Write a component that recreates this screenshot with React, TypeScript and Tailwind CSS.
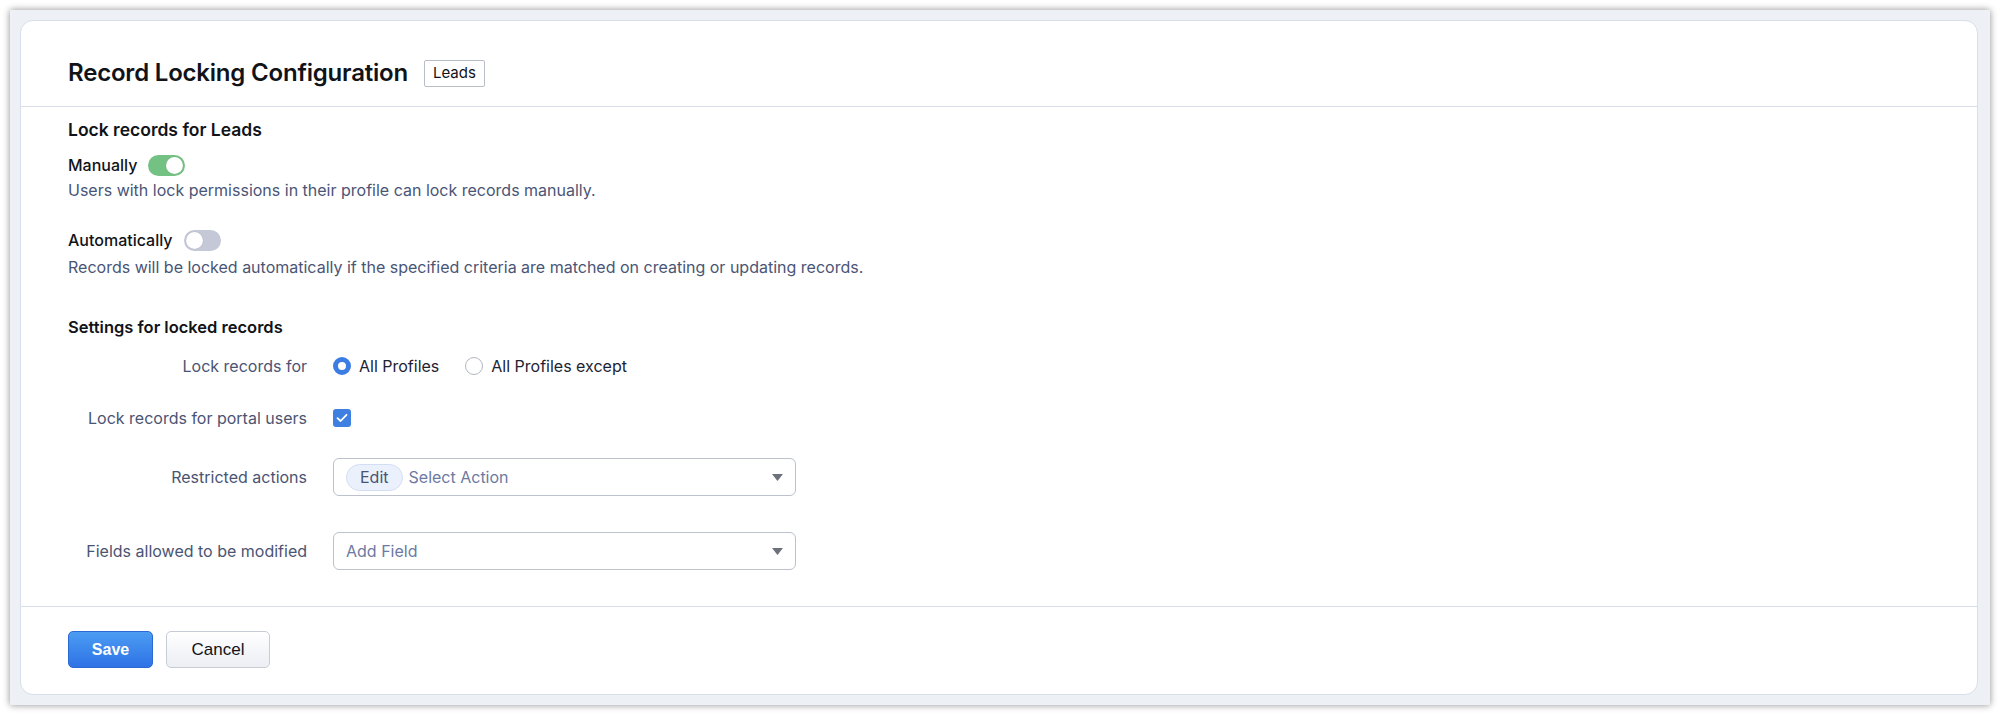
import React from "react";

const puvi = { fontFamily: "Inter, 'Open Sans', sans-serif" };

const Toggle: React.FC<{ on: boolean }> = ({ on }) => (
  <span
    className={`ml-[11px] inline-flex h-[21px] w-[37px] items-center rounded-full px-[2px] ${
      on ? "justify-end bg-[#74c283]" : "justify-start bg-[#c5c9d7]"
    }`}
  >
    <span className="h-[17px] w-[17px] rounded-full bg-white shadow-[0_0_1px_rgba(0,0,0,0.25)]" />
  </span>
);

const Radio: React.FC<{ checked: boolean; label: string }> = ({ checked, label }) => (
  <label className="flex items-center gap-[8px] text-[16px] text-[#1d2333]">
    {checked ? (
      <span className="h-[18px] w-[18px] rounded-full border-[5px] border-[#3b7de2] bg-white" />
    ) : (
      <span className="h-[18px] w-[18px] rounded-full border-[1.5px] border-[#b3b7c2] bg-white" />
    )}
    {label}
  </label>
);

const Caret = () => (
  <svg width="11" height="7" viewBox="0 0 11 7" className="ml-auto">
    <path d="M0 0 H11 L5.5 7 Z" fill="#6d717c" />
  </svg>
);

const FormRow: React.FC<{ label: string; className: string; children: React.ReactNode }> = ({
  label,
  className,
  children,
}) => (
  <div className={`flex items-center ${className}`}>
    <div className="w-[239px] shrink-0 text-right text-[16px] text-[#4a5473]">{label}</div>
    <div className="ml-[26px] flex items-center">{children}</div>
  </div>
);

export default function App() {
  return (
    <div className="min-h-screen bg-white p-[10px]" style={puvi}>
      <div className="h-[695px] w-[1980px] bg-[#edf0f5] p-[10px] shadow-[0_0_7px_rgba(0,0,0,0.45)]">
        <div className="flex h-[675px] w-[1958px] flex-col rounded-[13px] border border-[#d8dfeb] bg-white">
          {/* header */}
          <div className="flex items-center border-b border-[#d8dfeb] pb-[18px] pl-[47px] pt-[37px]">
            <h1 className="text-[24px] font-semibold leading-[30px] tracking-[-0.2px] text-[#111318]">
              Record Locking Configuration
            </h1>
            <span className="ml-[16px] flex h-[27px] items-center rounded-[2px] border border-[#b9bdc7] px-[8px] text-[15px] text-[#111318]">
              Leads
            </span>
          </div>

          {/* body */}
          <div className="flex h-[499px] flex-col pl-[47px] pt-[11px] leading-[24px]">
            <div className="text-[17.5px] font-semibold text-[#111318]">Lock records for Leads</div>
            <div className="mt-[11px] flex h-[24px] items-center text-[16px] font-medium text-[#111318]">
              Manually
              <Toggle on />
            </div>
            <div className="mt-[1px] text-[16px] text-[#4a5576]">
              Users with lock permissions in their profile can lock records manually.
            </div>
            <div className="mt-[26px] flex h-[24px] items-center text-[16px] font-medium text-[#111318]">
              Automatically
              <Toggle on={false} />
            </div>
            <div className="mt-[3px] text-[16px] text-[#4a5576]">
              Records will be locked automatically if the specified criteria are matched on creating or updating records.
            </div>
            <div className="mt-[36px] text-[16.5px] font-semibold text-[#111318]">Settings for locked records</div>

            <FormRow label="Lock records for" className="mt-[15px] h-[24px]">
              <Radio checked label="All Profiles" />
              <div className="ml-[26px]">
                <Radio checked={false} label="All Profiles except" />
              </div>
            </FormRow>

            <FormRow label="Lock records for portal users" className="mt-[28px] h-[24px]">
              <span className="flex h-[18px] w-[18px] items-center justify-center rounded-[3px] bg-[#3f7fe2]">
                <svg width="12" height="10" viewBox="0 0 12 10">
                  <path d="M1.5 5.2 L4.6 8 L10.5 1.8" fill="none" stroke="white" strokeWidth="1.8" strokeLinecap="round" strokeLinejoin="round" />
                </svg>
              </span>
            </FormRow>

            <FormRow label="Restricted actions" className="mt-[28px] h-[38px]">
              <div className="flex h-[38px] w-[463px] items-center rounded-[6px] border border-[#bcc1cc] pl-[12px] pr-[12px]">
                <span className="flex h-[27px] items-center rounded-full border border-[#d3def3] bg-[#ebf1fc] px-[13px] text-[16px] text-[#4a5473]">
                  Edit
                </span>
                <span className="ml-[6px] text-[16px] text-[#6c7aa2]">Select Action</span>
                <Caret />
              </div>
            </FormRow>

            <FormRow label="Fields allowed to be modified" className="mt-[36px] h-[38px]">
              <div className="flex h-[38px] w-[463px] items-center rounded-[6px] border border-[#bcc1cc] pl-[12px] pr-[12px]">
                <span className="text-[16px] text-[#6c7aa2]">Add Field</span>
                <Caret />
              </div>
            </FormRow>
          </div>

          {/* footer */}
          <div
            className="flex items-center gap-[13px] border-t border-[#d8dfeb] pl-[47px] pt-[24px]"
            style={{ fontFamily: "'Liberation Sans', Arial, sans-serif" }}
          >
            <button className="h-[37px] w-[85px] rounded-[5px] border border-[#2b69d3] bg-gradient-to-b from-[#4c9cf2] to-[#2f72e6] text-[16px] font-bold text-white">
              Save
            </button>
            <button className="h-[37px] w-[104px] rounded-[5px] border border-[#c8ccd7] bg-gradient-to-b from-white to-[#eceef4] text-[17px] text-[#111318]">
              Cancel
            </button>
          </div>
        </div>
      </div>
    </div>
  );
}
